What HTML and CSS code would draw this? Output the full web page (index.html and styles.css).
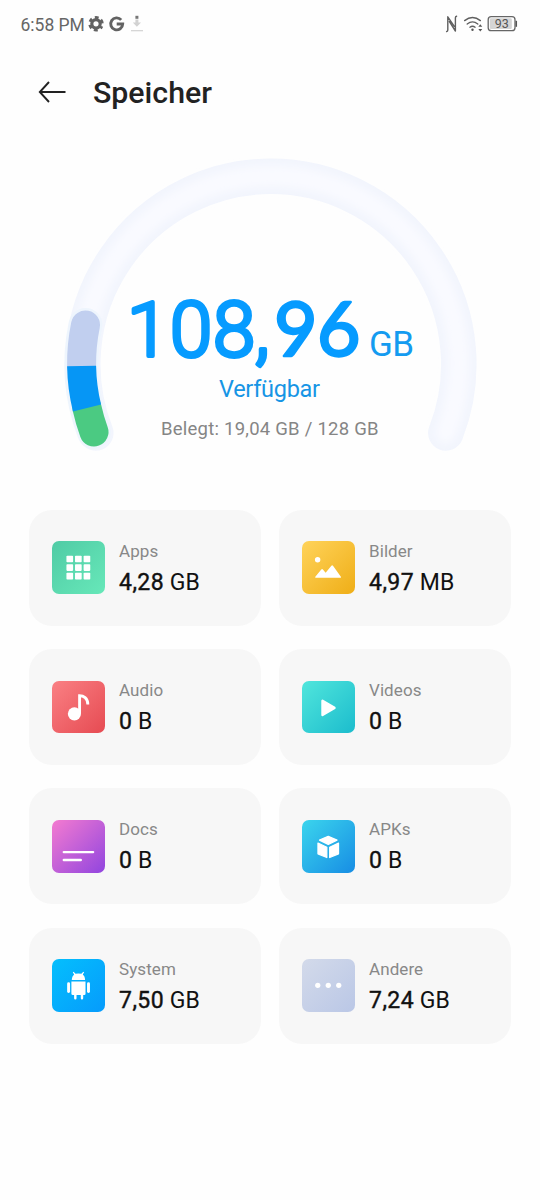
FILE: index.html
```html
<!DOCTYPE html>
<html lang="de">
<head>
<meta charset="utf-8">
<title>Speicher</title>
<link rel="stylesheet" href="styles.css">
</head>
<body>
<div class="status">
  <span class="clock">6:58 PM</span>
  <svg class="status-left" width="60" height="20" viewBox="0 0 60 20">
    <g fill="none" stroke="#626262">
      <circle cx="9" cy="9.8" r="4.2" stroke-width="3.2"/>
      <circle cx="9" cy="9.8" r="6.3" stroke-width="2.8" stroke-dasharray="3.6 2.997" stroke-dashoffset="1.8" transform="rotate(30 9 9.8)"/>
      <path d="M34.2 5.9A6 6 0 1 0 35.7 10H29.7" stroke-width="2.9"/>
    </g>
    <path d="M48.4 1.8h3v3h-3z" fill="#777"/>
    <path d="M48.4 5.5h3v3h2.6l-4.1 4.3-4.1-4.3h2.6z" fill="#d2d2d2"/>
    <path d="M44 16.7h12" stroke="#d2d2d2" stroke-width="1.2"/>
  </svg>
  <svg class="status-right" width="74" height="24" viewBox="0 0 74 24">
    <g fill="none" stroke="#5f5f5f" stroke-linecap="round">
      <path d="M1.6 19.6q1.2-.3 1.2-1.6V4.8L9.3 14.4M11.6 4.2q-1.2.3-1.2 1.6V19L4.4 9.6" stroke-width="1.4" stroke-linejoin="round"/>
      <path d="M19.6 8.6q7.9-6.3 15.8 0M22.2 12q5.3-4.2 10.6 0M24.9 15.2q2.6-2 5.2 0" stroke-width="1.35"/>
    </g>
    <circle cx="27.5" cy="17.7" r="1.2" fill="#555"/>
    <path d="M33.3 14.7l2-2.5 2 2.5zM33.3 17l2 2.5 2-2.5z" fill="#555"/>
    <rect x="43.2" y="4.7" width="26.8" height="14" rx="3" fill="#fff" stroke="#666" stroke-width="1.3"/>
    <rect x="44.8" y="6.3" width="22" height="10.8" rx="1.3" fill="#d5d5d5"/>
    <path d="M71.3 8.8v6" stroke="#555" stroke-width="1.5"/>
    <text class="battery" x="49.7" y="16.1">93</text>
  </svg>
</div>
<header class="header">
  <svg width="28" height="22" viewBox="0 0 28 22" fill="none" stroke="#222" stroke-width="1.9"><path d="M27.5 11H1.8M11 1L1.8 11l9.2 10"/></svg>
  <h1 class="title">Speicher</h1>
</header>
<svg class="gauge" width="540" height="340" viewBox="0 130 540 340">
  <defs>
    <filter id="soft" x="-10%" y="-10%" width="120%" height="120%"><feGaussianBlur stdDeviation="4"/></filter>
  </defs>
  <g fill="none" stroke-linecap="round">
    <path d="M95.8 433A188 188 0 1 1 445.8 433" stroke="#f2f5fd" stroke-width="35.5"/>
    <path d="M95.8 433A188 188 0 1 1 445.8 433" stroke="#f9faff" stroke-width="21" filter="url(#soft)"/>
    <path d="M94 432A189.5 189.5 0 0 1 85.5 325" stroke="#eef5fd" stroke-width="34"/>
    <path d="M81.6 366A189.5 189.5 0 0 1 85.5 325" stroke="#c1cfef" stroke-width="29"/>
    <path d="M94 432A189.5 189.5 0 0 1 87 408" stroke="#4bca82" stroke-width="29"/>
    <path d="M87 408A189.5 189.5 0 0 1 81.6 366" stroke="#0696f5" stroke-width="29" stroke-linecap="butt"/>
  </g>
  <text class="free-number" y="355.5" x="127 170 213 255 274 317">108,<tspan class="slanted">96</tspan></text>
  <text class="free-unit" x="369" y="356" textLength="45">GB</text>
  <text class="free-label" x="219" y="397" textLength="101">Verfügbar</text>
  <text class="used" x="161" y="435" textLength="217.5">Belegt: 19,04 GB / 128 GB</text>
</svg>
<main class="grid">
  <section class="card">
    <svg class="icon apps" viewBox="0 0 52 52" fill="#fff"><rect x="14.3" y="14.5" width="6.6" height="6.6" rx=".8"/><rect x="22.8" y="14.5" width="6.6" height="6.6" rx=".8"/><rect x="31.3" y="14.5" width="6.6" height="6.6" rx=".8"/><rect x="14.3" y="23" width="6.6" height="6.6" rx=".8"/><rect x="22.8" y="23" width="6.6" height="6.6" rx=".8"/><rect x="31.3" y="23" width="6.6" height="6.6" rx=".8"/><rect x="14.3" y="31.5" width="6.6" height="6.6" rx=".8"/><rect x="22.8" y="31.5" width="6.6" height="6.6" rx=".8"/><rect x="31.3" y="31.5" width="6.6" height="6.6" rx=".8"/></svg>
    <div><div class="label">Apps</div><div class="value"><b>4,28</b> GB</div></div>
  </section>
  <section class="card">
    <svg class="icon images" viewBox="0 0 52 52" fill="#fff"><circle cx="15.5" cy="18.5" r="2.7"/><path d="M13.7 36.5q-1.2 0-.5-1l5.9-7.2q.8-.9 1.6 0l2.7 3.1 5.7-6.9q.8-.9 1.6 0l7.8 11q.6 1-.6 1z"/></svg>
    <div><div class="label">Bilder</div><div class="value"><b>4,97</b> MB</div></div>
  </section>
  <section class="card">
    <svg class="icon audio" viewBox="0 0 52 52"><circle cx="22.2" cy="32.5" r="6.5" fill="#fff"/><path d="M27.3 32.5V14.4C31 14.4 35.6 17 35.5 23.2" fill="none" stroke="#fff" stroke-width="2.8"/></svg>
    <div><div class="label">Audio</div><div class="value"><b>0</b> B</div></div>
  </section>
  <section class="card">
    <svg class="icon videos" viewBox="0 0 52 52"><path d="M20.3 19.7v13.9L32.2 26.6z" fill="#fff" stroke="#fff" stroke-width="2.4" stroke-linejoin="round"/></svg>
    <div><div class="label">Videos</div><div class="value"><b>0</b> B</div></div>
  </section>
  <section class="card">
    <svg class="icon docs" viewBox="0 0 52 52"><path d="M11.7 31.8h29M11.7 39.6h16.8" stroke="#fff" stroke-width="2.4" stroke-linecap="round"/></svg>
    <div><div class="label">Docs</div><div class="value"><b>0</b> B</div></div>
  </section>
  <section class="card">
    <svg class="icon apks" viewBox="0 0 52 52" fill="#fff" stroke="#fff" stroke-width="1.2" stroke-linejoin="round"><path d="M26 16.2l8.7 3.7L26 24.1l-8.7-4.2zM15.8 22.8l8.8 4.2v10.2l-8.8-3.7zM36.2 22.8L27.4 27v10.2l8.8-3.7z"/></svg>
    <div><div class="label">APKs</div><div class="value"><b>0</b> B</div></div>
  </section>
  <section class="card">
    <svg class="icon system" viewBox="0 0 52 52" fill="#fff"><path d="M19.6 20.9c0-3 1.3-4.6 2.3-5.6l-1.3-2.1.8-.6 1.9 1.9q2.9-.5 5.8 0l1.9-1.9.8.6-1.3 2.1c1.2 1 2.3 2.6 2.3 5.6z"/><path d="M19.2 22.2h14v12.3q0 1.2-1.2 1.2h-1.1v3.2q0 1.2-1.2 1.2t-1.2-1.2v-3.2h-4.2v3.2q0 1.2-1.2 1.2t-1.2-1.2v-3.2h-1.2q-1.5 0-1.5-1.2z"/><rect x="15" y="23" width="2.9" height="10.6" rx="1.4"/><rect x="34.7" y="23" width="2.9" height="10.6" rx="1.4"/></svg>
    <div><div class="label">System</div><div class="value"><b>7,50</b> GB</div></div>
  </section>
  <section class="card">
    <svg class="icon other" viewBox="0 0 52 52" fill="#fff"><circle cx="15.6" cy="26" r="2.6"/><circle cx="26" cy="26" r="2.6"/><circle cx="36.4" cy="26" r="2.6"/></svg>
    <div><div class="label">Andere</div><div class="value"><b>7,24</b> GB</div></div>
  </section>
</main>
</body>
</html>
```
FILE: styles.css
```css
* { box-sizing: border-box; }
body {
  margin: 0;
  width: 540px;
  height: 1200px;
  overflow: hidden;
  background: #fefefe;
  font-family: Roboto, sans-serif;
  color: #111;
}
svg { display: block; flex: none; }
.status {
  display: flex;
  align-items: flex-start;
  height: 48px;
  padding: 12px 21px 0 20.5px;
}
.clock { width: 66.5px; font-size: 17.5px; line-height: 26px; color: #666; white-space: nowrap; }
.status-left { margin-top: 2px; }
.status-right { margin-left: auto; }
.battery { font-family: Roboto, sans-serif; font-size: 12.5px; fill: #555; }
.header {
  display: flex;
  align-items: center;
  gap: 27px;
  height: 82px;
  padding: 0 38px;
}
.header svg { margin-top: 5px; }
.title { margin: 8px 0 0; font-size: 30.3px; font-weight: 500; line-height: 40px; color: #222; }
.gauge { font-family: Roboto, sans-serif; }
.free-number {
  font-size: 76px;
  font-weight: 300;
  fill: #069bff;
  stroke: #069bff;
  stroke-width: 4px;
  stroke-linejoin: round;
}
.slanted { font-family: Lato, Roboto, sans-serif; font-weight: 400; font-size: 75px; stroke-width: 2.4px; }
.free-unit { font-size: 35px; fill: #149bf0; }
.free-label { font-size: 23.5px; fill: #1695e5; }
.used { font-size: 18.5px; fill: #858585; }
.grid {
  display: grid;
  grid-template-columns: 232px 232px;
  grid-auto-rows: 116px;
  gap: 23.4px 18px;
  padding: 39.5px 29px 0;
}
.card {
  display: flex;
  align-items: center;
  gap: 14.5px;
  padding-left: 23px;
  border-radius: 23px;
  background: #f7f7f7;
}
.icon { width: 52.5px; height: 52.5px; border-radius: 7px; }
.label { font-size: 17px; line-height: 22px; color: #888; letter-spacing: .08px; }
.value { margin-top: 8px; font-size: 23px; line-height: 26px; white-space: nowrap; }
.value b { font-weight: 400; letter-spacing: .45px; -webkit-text-stroke: .4px #111; }
.apps { background: linear-gradient(135deg, #50cba5, #67e8b9); }
.images { background: linear-gradient(135deg, #ffd35a, #efae17); }
.audio { background: linear-gradient(135deg, #fa8084, #e64b52); }
.videos { background: linear-gradient(135deg, #50e6dc, #1cbccd); }
.docs { background: linear-gradient(135deg, #f47bd0, #9145df); }
.apks { background: linear-gradient(135deg, #3bd5ed, #178de4); }
.system { background: linear-gradient(135deg, #04bffd, #069bfc); }
.other { background: linear-gradient(135deg, #d3daea, #bac7e6); }
```
